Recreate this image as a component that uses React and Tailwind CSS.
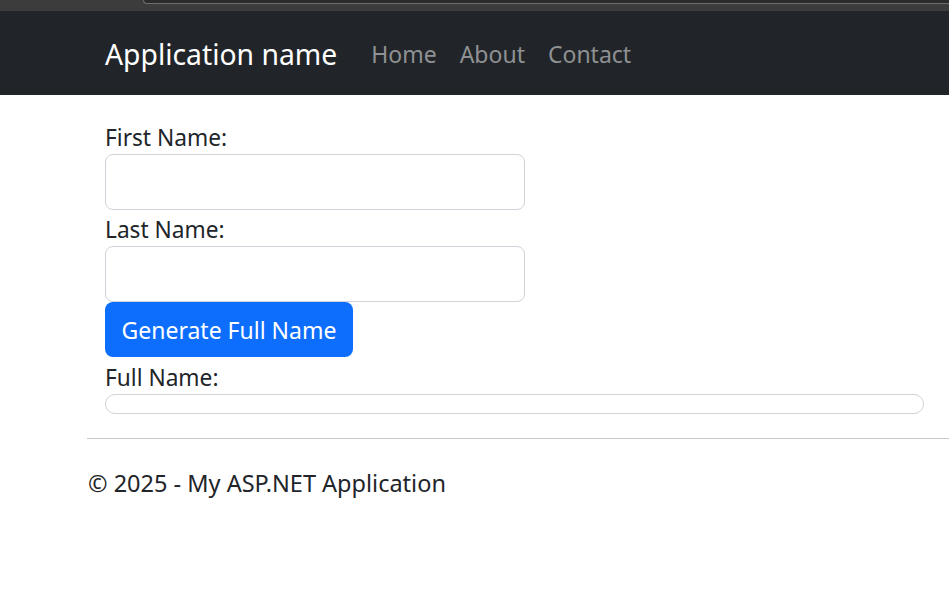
export default function App() {
  return (
    <div className="min-h-[600px] bg-white text-[#212529]" style={{ fontFamily: '"Noto Sans", "Open Sans", sans-serif' }}>
      {/* browser chrome strip */}
      <div className="flex h-[11px] bg-[#3c3c3c]">
        <div className="w-[143px] shrink-0" />
        <div className="h-[4px] flex-1 rounded-bl-[8px] border-b border-l border-[#6e6e6e] bg-[#2b2b2b]" />
      </div>

      {/* Navbar */}
      <nav className="flex h-[84px] items-center bg-[#212529] pl-[105px]">
        <span className="pt-[2px] text-[28.3px] leading-none text-white">Application name</span>
        <div className="ml-[34px] flex items-center gap-[23px] pt-[2px] text-[23px] leading-none text-[#8f9193]">
          <span>Home</span>
          <span>About</span>
          <span>Contact</span>
        </div>
      </nav>

      {/* Form */}
      <main className="pl-[105px] pt-[23px] text-[22.7px]">
        <label className="block h-[36px] pt-[2px] leading-[36px]">First Name:</label>
        <input className="block h-[56px] w-[420px] rounded-[8px] border border-[#ced4da] px-3 outline-none" />
        <label className="block h-[36px] pt-[2px] leading-[36px]">Last Name:</label>
        <input className="block h-[56px] w-[420px] rounded-[8px] border border-[#ced4da] px-3 outline-none" />
        <button className="block h-[55px] w-[248px] rounded-[8px] bg-[#0d6efd] pt-[2px] text-[23px] text-white">
          Generate Full Name
        </button>
        <label className="block h-[37px] pt-[2px] leading-[37px]">Full Name:</label>
        <div className="h-[20px] w-[819px] rounded-[10px] border border-[#ced4da]" />
      </main>

      <footer className="pl-[87px] pt-[24px]">
        <hr className="border-t border-[#c9c9c9]" />
        <p className="pl-[1px] pt-[28px] text-[23.5px] leading-[32px]">© 2025 - My ASP.NET Application</p>
      </footer>
    </div>
  )
}
